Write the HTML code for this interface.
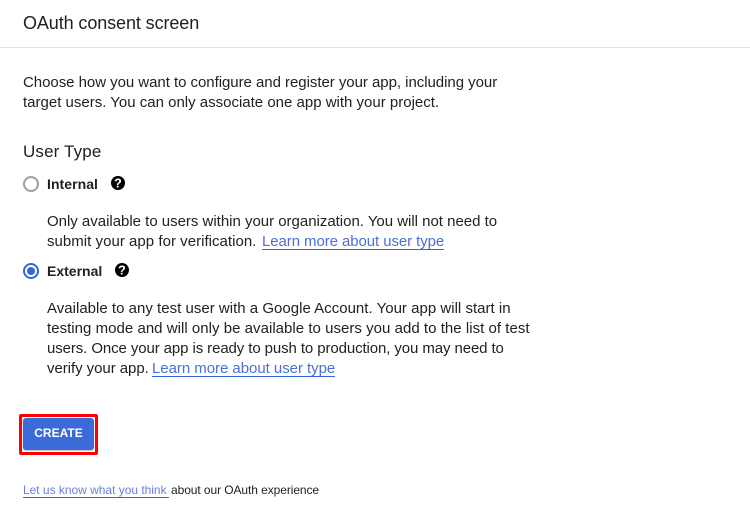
<!DOCTYPE html>
<html><head><meta charset="utf-8">
<style>
html,body{margin:0;padding:0;background:#fff}
body{width:750px;height:510px;position:relative;overflow:hidden;font-family:"Liberation Sans",sans-serif;color:#202124}
.t{position:absolute;white-space:nowrap;font-size:15px;line-height:20px;color:#202124}
a{color:#4a6fd8;text-decoration:none}
.u{position:absolute;height:1px;background:#3367d6}
</style></head><body>
<div class="t" style="left:23px;top:12px;font-size:18px;line-height:22px;letter-spacing:-.1px">OAuth consent screen</div>
<div style="position:absolute;left:0;top:47px;width:750px;height:1px;background:#e0e0e0"></div>
<div class="t" style="left:23px;top:73px;letter-spacing:-.04px">Choose how you want to configure and register your app, including your</div>
<div class="t" style="left:23px;top:93px">target users. You can only associate one app with your project.</div>
<div class="t" style="left:23px;top:141px;font-size:17px;line-height:22px;letter-spacing:.15px">User Type</div>
<svg style="position:absolute;left:23px;top:176px" width="16" height="16"><circle cx="8" cy="8" r="7" fill="none" stroke="#9e9e9e" stroke-width="2"/></svg>
<div class="t" style="left:47px;top:174px;font-weight:bold;font-size:14px;letter-spacing:.05px">Internal</div>
<svg style="position:absolute;left:111px;top:176px" width="14" height="14" viewBox="0 0 14 14"><circle cx="7" cy="7" r="7" fill="#000"/><text x="7" y="11.5" text-anchor="middle" font-family="Liberation Sans" font-weight="bold" font-size="12.5" fill="#fff">?</text></svg>
<div class="t" style="left:47px;top:212px;letter-spacing:-.015px">Only available to users within your organization. You will not need to</div>
<div class="t" style="left:47px;top:232px;letter-spacing:.03px">submit your app for verification.</div>
<a class="t" href="#" style="left:262px;top:232px;color:#4a6fd8;letter-spacing:-.08px">Learn more about user type</a>
<div class="u" style="left:262px;top:249px;width:182px"></div>
<svg style="position:absolute;left:23px;top:263px" width="16" height="16"><circle cx="8" cy="8" r="7" fill="none" stroke="#3367d6" stroke-width="2"/><circle cx="8" cy="8" r="4" fill="#3367d6"/></svg>
<div class="t" style="left:47px;top:261px;font-weight:bold;font-size:14px">External</div>
<svg style="position:absolute;left:115px;top:263px" width="14" height="14" viewBox="0 0 14 14"><circle cx="7" cy="7" r="7" fill="#000"/><text x="7" y="11.5" text-anchor="middle" font-family="Liberation Sans" font-weight="bold" font-size="12.5" fill="#fff">?</text></svg>
<div class="t" style="left:47px;top:299px;letter-spacing:.015px">Available to any test user with a Google Account. Your app will start in</div>
<div class="t" style="left:47px;top:319px;letter-spacing:.03px">testing mode and will only be available to users you add to the list of test</div>
<div class="t" style="left:47px;top:339px;letter-spacing:-.1px">users. Once your app is ready to push to production, you may need to</div>
<div class="t" style="left:47px;top:359px;letter-spacing:-.05px">verify your app.</div>
<a class="t" href="#" style="left:152px;top:359px;color:#4a6fd8;letter-spacing:-.04px">Learn more about user type</a>
<div class="u" style="left:152px;top:376px;width:183px"></div>
<div style="position:absolute;left:19px;top:414px;width:79px;height:41px;box-sizing:border-box;border:3px solid #f00;border-radius:2px;background:#fff"></div>
<div style="position:absolute;left:23px;top:418px;width:71px;height:32px;background:#3b6bd9;border-radius:3px;box-shadow:0 1px 1px rgba(0,0,0,.25);color:#fff;font-size:12px;font-weight:bold;text-align:center;line-height:31px">CREATE</div>
<a class="t" href="#" style="left:23px;top:480px;font-size:12px;color:#6a7fe0;letter-spacing:-.02px">Let us know what you think</a>
<div class="t" style="left:171px;top:480px;font-size:12px;letter-spacing:-.08px">about our OAuth experience</div>
<div class="u" style="left:23px;top:497px;width:146px"></div>
</body></html>
